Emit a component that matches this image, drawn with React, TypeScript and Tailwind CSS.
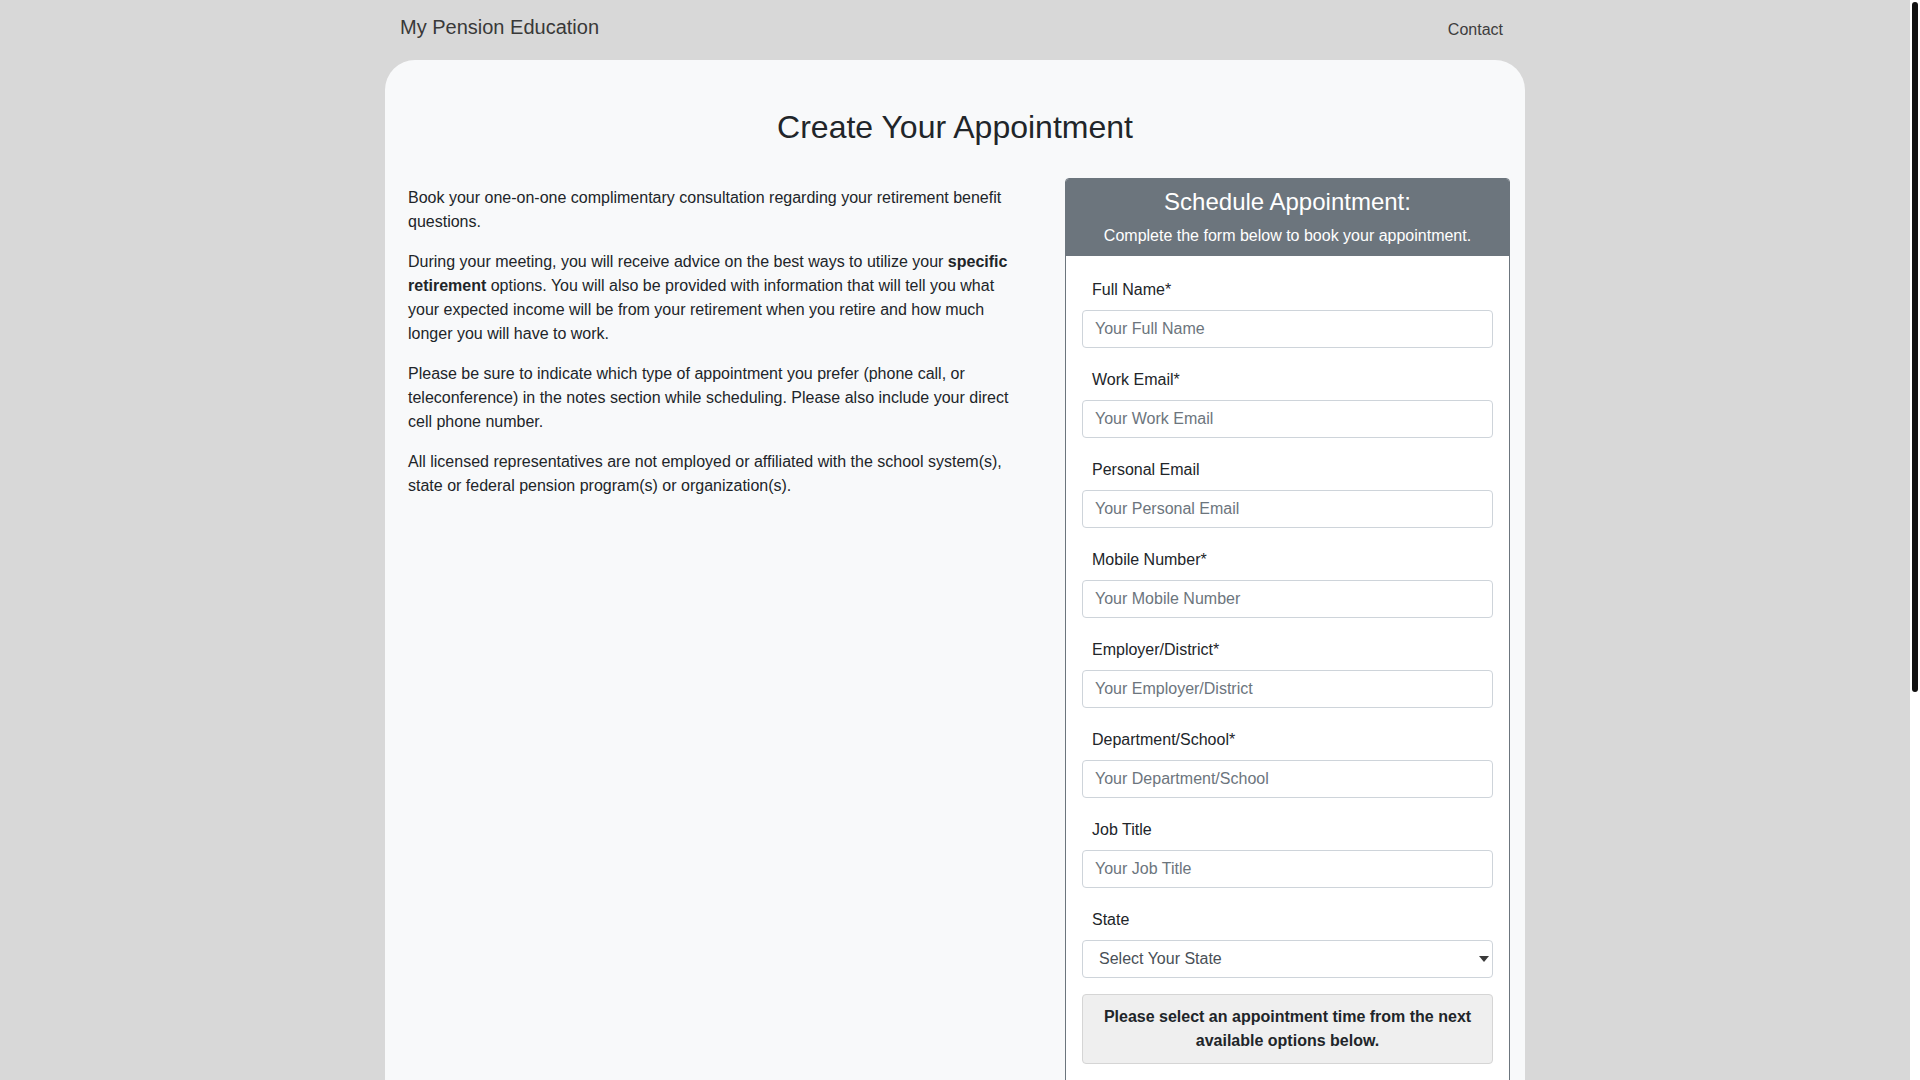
import React from "react";

const fields: { label: string; placeholder: string }[] = [
  { label: "Full Name*", placeholder: "Your Full Name" },
  { label: "Work Email*", placeholder: "Your Work Email" },
  { label: "Personal Email", placeholder: "Your Personal Email" },
  { label: "Mobile Number*", placeholder: "Your Mobile Number" },
  { label: "Employer/District*", placeholder: "Your Employer/District" },
  { label: "Department/School*", placeholder: "Your Department/School" },
  { label: "Job Title", placeholder: "Your Job Title" },
];

export default function App() {
  return (
    <div className="flex h-screen w-full overflow-hidden bg-[#d8d8d8] font-['Liberation_Sans',Arial,sans-serif]">
      <div className="min-w-0 flex-1 overflow-hidden">
        <div className="mx-auto w-[1140px]">
          <nav className="flex h-[60px] items-start justify-between">
            <a className="ml-[15px] mt-[12px] text-[20px] leading-[30px] text-[#393939]">
              My Pension Education
            </a>
            <a className="mr-[22px] mt-[18px] text-[16px] leading-[24px] text-[#3d3d3d]">
              Contact
            </a>
          </nav>
          <main className="rounded-t-[30px] bg-[#f8f9fa] pt-[48px] pb-10">
            <h1 className="text-center text-[32px] leading-[38px] text-[#212529]">
              Create Your Appointment
            </h1>
            <div className="mt-[32px] flex pl-[23px] pr-[15px]">
              <div className="w-[612px] pt-[8px] text-[16px] leading-[24px] text-[#212529]">
                <p className="mb-4">
                  Book your one-on-one complimentary consultation regarding your retirement benefit questions.
                </p>
                <p className="mb-4">
                  During your meeting, you will receive advice on the best ways to utilize your{" "}
                  <b className="font-bold">specific retirement</b> options. You will also be provided with
                  information that will tell you what your expected income will be from your retirement when
                  you retire and how much longer you will have to work.
                </p>
                <p className="mb-4">
                  Please be sure to indicate which type of appointment you prefer (phone call, or
                  teleconference) in the notes section while scheduling. Please also include your direct cell
                  phone number.
                </p>
                <p className="mb-4">
                  All licensed representatives are not employed or affiliated with the school system(s), state
                  or federal pension program(s) or organization(s).
                </p>
              </div>
              <div className="ml-auto w-[445px] overflow-hidden rounded-t-[4px] border border-[#6c757d] bg-white">
                <div className="bg-[#6c757d] pt-2 pb-[8px] text-center text-white">
                  <h4 className="mb-[8px] text-[24px] leading-[29px]">Schedule Appointment:</h4>
                  <p className="text-[16px] leading-[24px]">Complete the form below to book your appointment.</p>
                </div>
                <form className="px-4 pt-[22px] pb-6 text-[16px] leading-[24px] text-[#212529]">
                  {fields.map((f) => (
                    <div key={f.label} className="mb-5">
                      <label className="block pl-[10px]">{f.label}</label>
                      <input
                        type="text"
                        placeholder={f.placeholder}
                        className="mt-2 block h-[38px] w-full rounded-[4px] border border-[#ced4da] bg-white px-3 text-[16px] text-[#495057] outline-none placeholder:text-[#6c757d]"
                      />
                    </div>
                  ))}
                  <div className="mb-4">
                    <label className="block pl-[10px]">State</label>
                    <div className="relative mt-2">
                      <select
                        defaultValue=""
                        className="block h-[38px] w-full appearance-none rounded-[4px] border border-[#ced4da] bg-white pl-4 pr-8 text-[16px] text-[#495057] outline-none"
                      >
                        <option value="">Select Your State</option>
                      </select>
                      <svg
                        className="pointer-events-none absolute right-[4px] top-[16px]"
                        width="10"
                        height="6"
                        viewBox="0 0 10 6"
                      >
                        <path d="M0 0 L10 0 L5 6 Z" fill="#3a3a3a" />
                      </svg>
                    </div>
                  </div>
                  <div className="rounded-[4px] border border-[#d5d5d5] bg-[#efefef] px-4 py-[10px] text-center font-bold text-[#212529]">
                    Please select an appointment time from the next available options below.
                  </div>
                  <div className="h-[300px]" />
                </form>
              </div>
            </div>
          </main>
        </div>
      </div>
      <div className="w-[10px] shrink-0 bg-white pl-[2px] pt-[2px]">
        <div className="h-[690px] w-[6px] rounded-full bg-[#111111]" />
      </div>
    </div>
  );
}
